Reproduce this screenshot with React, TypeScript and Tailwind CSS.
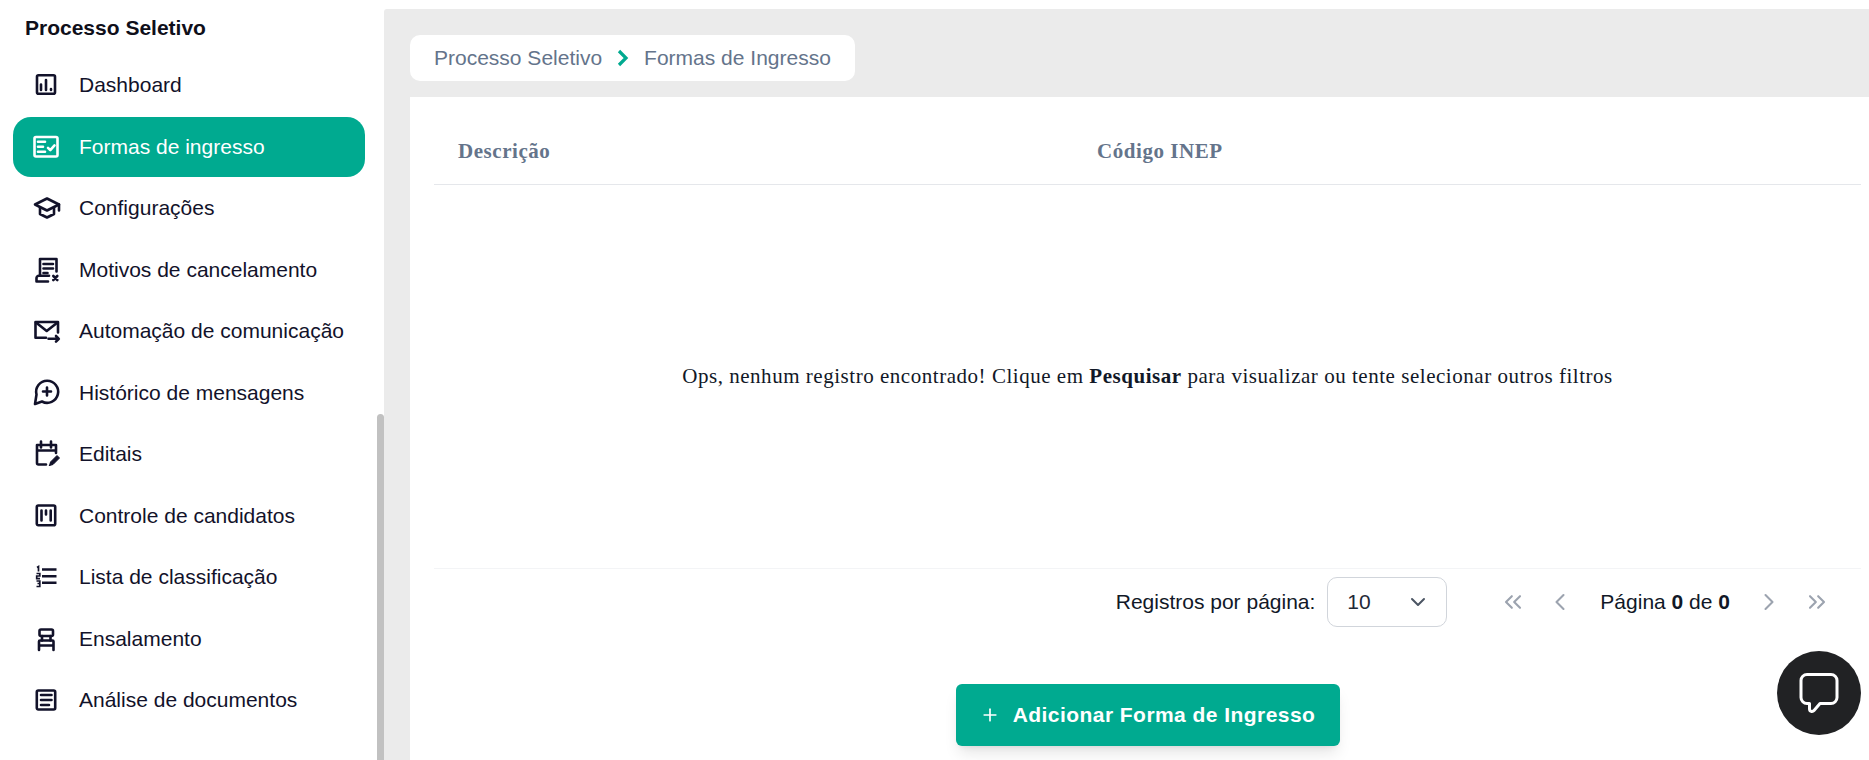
import React from "react";
import { ChevronDown, ChevronLeft, ChevronRight, ChevronsLeft, ChevronsRight, Plus } from "lucide-react";

type IconProps = { children: React.ReactNode };
const Ico = ({ children }: IconProps) => (
  <svg width="28" height="28" viewBox="0 0 28 28" fill="none" stroke="currentColor" strokeWidth="2.600" strokeLinecap="round" strokeLinejoin="round">
    {children}
  </svg>
);

const icons: Record<string, React.ReactNode> = {
  dash: (<Ico><rect x="4" y="4.200" width="18" height="18.600" rx="1.500" /><path d="M8 19v-5.500M13 19V9M18 19v-1" /></Ico>),
  forms: (<Ico><rect x="1.500" y="4" width="23" height="19.500" rx="1.500" /><path d="M5 8.700h7M5 13.700h5M5 18.700h7M15 14.800l2.300 2.300 4.200-4.700" /></Ico>),
  grad: (<Ico><path d="M14 4.500 2 10.500l12 6 12-6-12-6Z" /><path d="M7 13.500V20l7 3.500 7-3.500v-6.500M26 10.500v6" /></Ico>),
  cancel: (<Ico><path d="M7 18.500V3h16.500v12.500M10.500 8H20M10.500 12.500H20M10.500 17h4" /><path d="M16 19.800H6a2.300 2.300 0 0 0-2.500 2.300v3.400H15" /><path d="m20.300 20 4 4M24.300 20l-4 4" /></Ico>),
  mail: (<Ico><path d="M25 15.500V5H2.500v15.800H13" /><path d="M3 5.500 13.700 14 24.500 5.500" /><path d="M15.500 21.800H25.500M23 19l2.800 2.800-2.800 2.800" /></Ico>),
  chat: (<Ico><path d="M3.500 15.500A11 11 0 1 1 9 22.500L2 25l1.500-9.500Z" /><path d="M14 8.500v8M10 12.500h8" /></Ico>),
  cal: (<Ico><path d="M13 24.500H5.500A1.500 1.500 0 0 1 4 23V5h19v8M4 10.500h19M8 1.500v6M18 1.500v6" /><path d="m16.500 25.500 1-3.500 6.500-6.500 2.500 2.500-6.500 6.500-3.500 1Z" fill="currentColor" strokeWidth="1" /></Ico>),
  board: (<Ico><rect x="3.800" y="3.500" width="18.400" height="19.700" rx="1.500" /><path d="M8.500 8.500v10M13 8.500v4M17.700 8.500v10" /></Ico>),
  list: (<Ico><path d="M9 6.500h14.500M9 13.200h14.500M9 19.800h14.500" strokeWidth="2.600" strokeLinecap="butt" /><path d="M4 4.500 5.500 3.500v5M3.500 10.500h3.300v2.500H3.700v2.600h3.300M3.500 18h3.300v2.500H4.500h2.300V23.500H3.500" strokeWidth="1.700" strokeLinecap="butt" strokeLinejoin="miter" /></Ico>),
  seat: (<Ico><rect x="6.500" y="4.500" width="13.500" height="6.500" rx="1.500" /><path d="M9 11v4.500M17.500 11v4.500" /><path d="M6 25v-8.500a1 1 0 0 1 1-1h12.500a1 1 0 0 1 1 1V25M6 20.500h14.500" /></Ico>),
  doc: (<Ico><rect x="3.800" y="4.500" width="18.400" height="19" rx="1.500" /><path d="M8 9h10.500M8 14h10.500M8 19h8" /></Ico>),
};

const items: [string, string][] = [
  ["dash", "Dashboard"],
  ["forms", "Formas de ingresso"],
  ["grad", "Configurações"],
  ["cancel", "Motivos de cancelamento"],
  ["mail", "Automação de comunicação"],
  ["chat", "Histórico de mensagens"],
  ["cal", "Editais"],
  ["board", "Controle de candidatos"],
  ["list", "Lista de classificação"],
  ["seat", "Ensalamento"],
  ["doc", "Análise de documentos"],
];

export default function App() {
  return (
    <div className="relative flex h-[760px] w-[1869px] overflow-hidden bg-white font-['Liberation_Sans',Arial,sans-serif]">
      <aside className="relative w-[384px] shrink-0 pt-[16px]">
        <div className="h-[40px] pl-[25px] text-[21px] font-bold leading-[24px] text-[#0f0f1a]">Processo Seletivo</div>
        <nav className="mt-[-1px] flex flex-col pl-[13px] pr-[19px]">
          {items.map(([k, label], i) => (
            <div
              key={k}
              className={
                "mb-[1.5px] flex h-[60px] items-center gap-[18px] rounded-[18px] pl-[20px] text-[21px] " +
                (i === 1 ? "bg-[#00aa90] text-white" : "text-[#12122a]")
              }
            >
              <span className="flex h-[28px] w-[28px] shrink-0 items-center justify-center">{icons[k]}</span>
              <span>{label}</span>
            </div>
          ))}
        </nav>
        <div className="absolute right-0 top-[414px] bottom-0 w-[7px] rounded-t-[4px] bg-[#c1c1c1]" />
      </aside>
      <div className="mt-[9px] flex min-w-0 flex-1 flex-col rounded-tl-[3px] bg-[#ebebeb] pl-[26px] pt-[26px]">
        <div className="flex h-[46px] w-[445px] items-center rounded-[10px] bg-white pl-[24px] text-[21px] text-[#64748b]">
          <span>Processo Seletivo</span>
          <svg className="ml-[15px] mr-[15px]" width="12" height="18" viewBox="0 0 12 18" fill="none" stroke="#00aa90" strokeWidth="3.200" strokeLinejoin="miter">
            <path d="M2 2l7 7-7 7" />
          </svg>
          <span>Formas de Ingresso</span>
        </div>
        <main className="mt-[16px] flex flex-1 flex-col bg-white pl-[24px] pr-[8px]">
          <div className="flex h-[88px] items-center border-b border-[#e5e7eb] pl-[24px] pt-[22px] font-['Liberation_Serif',serif] text-[21px] font-bold tracking-[0.55px] text-[#64748b]">
            <span className="w-[639px]">Descrição</span>
            <span>Código INEP</span>
          </div>
          <div className="flex h-[384px] items-center justify-center border-b border-[#f3f4f6] font-['Liberation_Serif',serif] text-[21px] tracking-[0.53px] text-[#111827]">
            <span>Ops, nenhum registro encontrado! Clique em <b>Pesquisar</b> para visualizar ou tente selecionar outros filtros</span>
          </div>
          <div className="flex h-[66px] items-center justify-end pr-[30px] text-[21px] text-[#111827]">
            <span>Registros por página:</span>
            <div className="ml-[12px] flex h-[50px] w-[120px] items-center justify-between rounded-[10px] border border-[#d1d5db] pl-[19px] pr-[16px] text-[#1f2937]">
              <span>10</span>
              <ChevronDown className="h-[24px] w-[24px] text-[#4b5563]" />
            </div>
            <div className="ml-[52px] flex items-center text-[#9ca3af]">
              <ChevronsLeft className="h-[28px] w-[28px]" strokeWidth={1.8} />
              <ChevronLeft className="ml-[19px] h-[28px] w-[28px]" strokeWidth={1.8} />
            </div>
            <span className="ml-[26px]">Página <b>0</b> de <b>0</b></span>
            <div className="ml-[25px] flex items-center text-[#9ca3af]">
              <ChevronRight className="h-[28px] w-[28px]" strokeWidth={1.8} />
              <ChevronsRight className="ml-[20px] h-[28px] w-[28px]" strokeWidth={1.8} />
            </div>
          </div>
          <div className="flex justify-center pt-[49px]">
            <button className="flex h-[62px] w-[384px] items-center justify-center gap-[13px] rounded-[6px] bg-[#00aa90] text-[21px] font-bold tracking-[0.45px] text-white shadow-lg">
              <Plus className="h-[20px] w-[20px]" strokeWidth={2} />
              Adicionar Forma de Ingresso
            </button>
          </div>
        </main>
      </div>
      <div className="absolute left-[1777px] top-[651px] flex h-[84px] w-[84px] items-center justify-center rounded-full bg-[#212224]">
        <svg width="40" height="42" viewBox="0 0 40 42" fill="none" stroke="white" strokeWidth="3" strokeLinejoin="round">
          <path d="M8 2.500h24a6 6 0 0 1 6 6v17a6 6 0 0 1-6 6H21l-6 7c-1.500 1.700-4.500 1-4.500-1.500v-5.500H8a6 6 0 0 1-6-6v-17a6 6 0 0 1 6-6Z" />
        </svg>
      </div>
    </div>
  );
}
